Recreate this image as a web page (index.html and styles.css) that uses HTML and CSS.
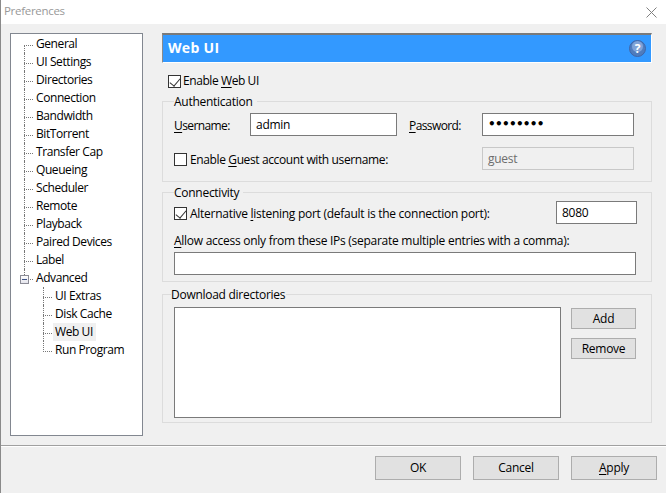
FILE: index.html
```html
<!DOCTYPE html>
<html lang="en">
<head>
<meta charset="utf-8">
<title>Preferences</title>
<link rel="stylesheet" href="styles.css">
</head>
<body>
<div class="window">
  <header class="titlebar">
    <span class="title">Preferences</span>
    <svg class="close" width="11" height="11" viewBox="0 0 11 11"><path d="M0.5 0.5L10.5 10.5M10.5 0.5L0.5 10.5" stroke="#808080" stroke-width="1" fill="none"/></svg>
  </header>
  <main class="main">
    <nav class="tree">
      <ul class="level top">
        <li>General</li>
        <li>UI Settings</li>
        <li>Directories</li>
        <li>Connection</li>
        <li>Bandwidth</li>
        <li>BitTorrent</li>
        <li>Transfer Cap</li>
        <li>Queueing</li>
        <li>Scheduler</li>
        <li>Remote</li>
        <li>Playback</li>
        <li>Paired Devices</li>
        <li>Label</li>
        <li class="parent"><span class="expander"></span>Advanced</li>
      </ul>
      <ul class="level sub">
        <li>UI Extras</li>
        <li>Disk Cache</li>
        <li class="selected"><span>Web UI</span></li>
        <li>Run Program</li>
      </ul>
    </nav>
    <section class="pane">
      <div class="banner">
        <h1>Web UI</h1>
        <svg class="help" width="17" height="17" viewBox="0 0 17 17">
          <circle cx="8.5" cy="8.5" r="8" fill="#4f7cbd" stroke="#3f66a8"/>
          <circle cx="8.5" cy="6.5" r="5.5" fill="#7fa3d8"/>
          <text x="8.5" y="13" text-anchor="middle" class="help-mark">?</text>
        </svg>
      </div>
      <label class="check enable"><span class="box on"></span><span>Enable <u>W</u>eb UI</span></label>
      <div class="group auth">
        <div class="legend">Authentication</div>
        <div class="row first">
          <label class="lbl user"><u>U</u>sername:</label>
          <div class="field w147">admin</div>
          <label class="lbl pass"><u>P</u>assword:</label>
          <div class="field w152 dots">••••••••</div>
        </div>
        <div class="row second">
          <label class="check guest"><span class="box"></span><span>Enable <u>G</u>uest account with username:</span></label>
          <div class="field w152 disabled">guest</div>
        </div>
      </div>
      <div class="group conn">
        <div class="legend">Connectivity</div>
        <div class="row port">
          <label class="check alt"><span class="box on"></span><span>Alternative <u>l</u>istening port (default is the connection port):</span></label>
          <div class="field w81">8080</div>
        </div>
        <div class="allow"><u>A</u>llow access only from these IPs (separate multiple entries with a comma):</div>
        <div class="field w462"></div>
      </div>
      <div class="group dirs">
        <div class="legend near">Download directories</div>
        <div class="dirs-body">
          <div class="listbox"></div>
          <div class="side">
            <button class="btn small" type="button">Add</button>
            <button class="btn small" type="button">Remove</button>
          </div>
        </div>
      </div>
    </section>
  </main>
  <footer class="footer">
    <button class="btn large" type="button">OK</button>
    <button class="btn large" type="button">Cancel</button>
    <button class="btn large" type="button"><u>A</u>pply</button>
  </footer>
</div>
</body>
</html>
```
FILE: styles.css
```css
* { box-sizing: border-box; }
html, body { margin: 0; padding: 0; }
body { width: 666px; height: 493px; overflow: hidden; font: 12px/16px "Open Sans", "Noto Sans", sans-serif; color: #000; letter-spacing: -0.27px; }
u { text-underline-offset: 2px; text-decoration-thickness: 1px; }
.window { width: 666px; height: 493px; background: #f0f0f0; display: flex; flex-direction: column; border-left: 1px solid #8a8a8a; }
.titlebar { height: 24px; background: #fff; display: flex; align-items: center; justify-content: space-between; padding: 0 9px 2px 3px; flex: none; }
.title { color: #999; font-size: 11.5px; letter-spacing: -0.3px; }
.close { display: block; margin-top: 2px; }
.main { flex: 1; display: flex; padding: 9px 0 0 9px; gap: 19px; min-height: 0; }
.tree { width: 133px; height: 403px; background: #fff; border: 1px solid #828790; padding-top: 1px; flex: none; letter-spacing: -0.42px; }
.level { list-style: none; margin: 0; padding: 0; }
.level li { height: 18px; line-height: 18px; position: relative; white-space: nowrap; }
.top li { padding-left: 25px; }
.sub li { padding-left: 44px; }
.top li::before, .sub li::before { content: ""; position: absolute; top: 10px; height: 0; border-top: 1px dotted #777; width: 9px; }
.top li::before { left: 13px; }
.sub li::before { left: 32px; }
.top li::after, .sub li::after { content: ""; position: absolute; top: 0; height: 18px; border-left: 1px dotted #777; }
.top li::after { left: 13px; }
.sub li::after { left: 32px; }
.top li:first-child::after { top: 10px; height: 8px; }
.top li.parent::after { height: 6px; }
.sub li:last-child::after { height: 11px; }
.expander { position: absolute; left: 9px; top: 6px; width: 9px; height: 9px; background: linear-gradient(#fff, #e4e4ec); border: 1px solid #8c8c96; z-index: 1; }
.expander::after { content: ""; position: absolute; left: 1px; top: 3px; width: 5px; height: 1px; background: #3f5488; }
.selected span { display: inline-block; background: #f0f0f0; padding: 0 3px 0 2px; margin-left: -2px; height: 18px; }
.pane { width: 490px; flex: none; }
.banner { height: 30px; background: #3399ff; border: 1px solid #fff; border-top: 2px solid #7a7a7a; border-left: 1px solid #8a8a8a; display: flex; align-items: center; justify-content: space-between; padding: 0 5px 2px 5px; }
h1 { margin: 0; font-size: 14px; font-weight: 700; color: #fff; letter-spacing: 0.3px; }
.help { display: block; margin-top: 2px; }
.help-mark { font: 700 12px "Open Sans", sans-serif; fill: #fff; letter-spacing: 0; }
.check { display: flex; align-items: center; gap: 3px; white-space: nowrap; padding-top: 2px; }
.box { width: 13px; height: 13px; border: 1px solid #333; background: #fff; flex: none; position: relative; }
.box.on::after { content: ""; position: absolute; left: 3px; top: 0; width: 5px; height: 9px; border: solid #333; border-width: 0 1px 1px 0; transform: rotate(40deg); }
.enable { margin: 10px 0 0 6px; height: 16px; gap: 2px; padding-top: 0; letter-spacing: -0.42px; }
.group { border: 1px solid #dcdcdc; width: 490px; padding-left: 11px; }
.legend { width: fit-content; margin: -8px 0 0 0; padding: 0 4px 0 0; background: #f0f0f0; height: 16px; line-height: 16px; }
.legend.near { margin-left: -3px; padding: 0 1px 0 0; }
.row { display: flex; align-items: center; }
.auth { margin-top: 12px; height: 81px; }
.first { margin-top: 3px; }
.second { margin-top: 11px; }
.lbl { display: block; padding-top: 2px; letter-spacing: -0.6px; }
.user { width: 76px; }
.pass { width: 73px; margin-left: 12px; }
.guest { width: 308px; letter-spacing: -0.38px; }
.field { height: 23px; line-height: 21px; background: #fff; border: 1px solid #7a7a7a; padding: 0 5px; flex: none; }
.w147 { width: 147px; }
.w152 { width: 152px; }
.w81 { width: 81px; }
.w462 { width: 462px; }
.dots { font-family: "DejaVu Sans", sans-serif; font-size: 12px; letter-spacing: -0.7px; font-weight: 700; }
.disabled { background: #f0f0f0; border-color: #c8c8c8; color: #6d6d6d; }
.conn { margin-top: 10px; height: 90px; }
.port { margin-top: 0; }
.alt { width: 382px; }
.allow { margin-top: 9px; height: 16px; line-height: 16px; white-space: nowrap; }
.conn .w462 { margin-top: 3px; }
.dirs { margin-top: 12px; height: 129px; }
.dirs-body { display: flex; gap: 10px; margin-top: 4px; }
.listbox { width: 387px; height: 111px; background: #fff; border: 1px solid #7a7a7a; }
.side { display: flex; flex-direction: column; gap: 9px; padding-top: 1px; }
.btn { font: inherit; letter-spacing: inherit; color: #000; background: #e1e1e1; border: 1px solid #adadad; padding: 0; border-radius: 0; }
.small { width: 65px; height: 21px; }
.footer { flex: none; height: 48px; border-top: 1px solid #a0a0a0; box-shadow: inset 0 1px 0 #fff; display: flex; justify-content: flex-end; gap: 12px; padding: 10px 9px 0 0; }
.large { width: 86px; height: 24px; }
```
